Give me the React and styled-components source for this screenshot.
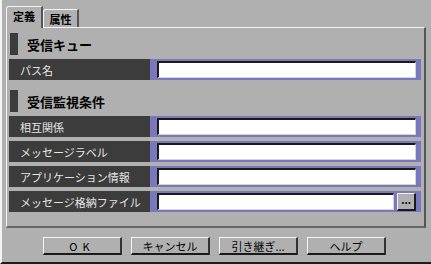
import React from 'react'
import styled, { createGlobalStyle } from 'styled-components'

const GlobalStyle = createGlobalStyle`
    html, body {
        margin: 0;
        padding: 0;
        background: #b0b0b0;
    }
    body {
        font-family: "Noto Sans CJK JP", "DejaVu Sans", sans-serif;
        color: #000;
    }
`;

const Window = styled.div`
    box-sizing: border-box;
    width: 431px;
    height: 264px;
    background: #b0b0b0;
    border-left: 2px solid #f4f4f4;
    border-bottom: 2px solid #1c1c1c;
    padding: 6px 4px 0 4px;
    display: flex;
    flex-direction: column;
`;

const TabBar = styled.div`
    display: flex;
    align-items: flex-end;
    height: 21px;
    position: relative;
    z-index: 1;
`;

const Tab = styled.div`
    box-sizing: border-box;
    width: ${p => p.$width}px;
    height: ${p => (p.$active ? 22 : 18)}px;
    margin-bottom: ${p => (p.$active ? -1 : 0)}px;
    background: #b0b0b0;
    border-top: 1px solid #f4f4f4;
    border-left: 1px solid #f4f4f4;
    border-right: 2px solid #555;
    border-top-left-radius: 3px;
    font-size: 11px;
    font-weight: 700;
    display: flex;
    align-items: center;
    justify-content: center;
    padding-bottom: ${p => (p.$active ? 3 : 0)}px;
`;

const Panel = styled.div`
    box-sizing: border-box;
    width: 420px;
    height: 201px;
    border-top: 1px solid #f4f4f4;
    border-left: 1px solid #f4f4f4;
    border-right: 2px solid #555;
    border-bottom: 2px solid #666;
    padding: 5px 3px 0 2px;
    display: flex;
    flex-direction: column;
`;

const SectionHead = styled.div`
    display: flex;
    align-items: center;
    height: 22px;
    margin-top: ${p => p.$top}px;
    padding-left: 1px;
    font-size: 13px;
    font-weight: 700;
    &:before {
        content: '';
        width: 8px;
        height: 22px;
        background: #3c3c3c;
        margin-right: 9px;
    }
`;

const Rows = styled.div`
    display: flex;
    flex-direction: column;
    gap: 4px;
    margin-top: 4px;
`;

const Row = styled.div`
    display: grid;
    grid-template-columns: 141px 1fr;
    height: 21px;
`;

const Label = styled.div`
    background: #3c3c3c;
    color: #e6e6e6;
    font-size: 11px;
    display: flex;
    align-items: center;
    padding-left: 11px;
    white-space: nowrap;
`;

const Field = styled.div`
    background: #7a78bc;
    display: flex;
    align-items: center;
    gap: 3px;
    padding: 0 5px 0 7px;
`;

const Input = styled.div`
    box-sizing: border-box;
    flex: 1;
    height: 17px;
    background: #fff;
    border-top: 2px solid #1a1a1a;
    border-left: 2px solid #1a1a1a;
    border-bottom: 1px solid #d4d4d4;
    border-right: 1px solid #d4d4d4;
`;

const DotsButton = styled.div`
    box-sizing: border-box;
    width: 19px;
    height: 18px;
    background: #b0b0b0;
    border-top: 1px solid #f4f4f4;
    border-left: 1px solid #f4f4f4;
    border-bottom: 2px solid #1a1a1a;
    border-right: 2px solid #1a1a1a;
    font-size: 10px;
    font-weight: 700;
    line-height: 12px;
    text-align: center;
    letter-spacing: 0px;
`;

const ButtonBar = styled.div`
    display: flex;
    justify-content: center;
    gap: 9px;
    margin-top: 9px;
    padding-right: 4px;
`;

const Button = styled.div`
    box-sizing: border-box;
    width: 79px;
    height: 18px;
    background: #b0b0b0;
    border-top: 1px solid #f4f4f4;
    border-left: 1px solid #f4f4f4;
    border-bottom: 2px solid #1a1a1a;
    border-right: 2px solid #333;
    font-size: 11px;
    display: flex;
    align-items: center;
    justify-content: center;
    letter-spacing: ${p => p.$spacing || 0}px;
`;

const queueRows = ['パス名']
const condRows = ['相互関係', 'メッセージラベル', 'アプリケーション情報', 'メッセージ格納ファイル']

function App() {
    return (
        <Window>
            <GlobalStyle />
            <TabBar>
                <Tab $active $width={37}>定義</Tab>
                <Tab $width={36}>属性</Tab>
            </TabBar>
            <Panel>
                <SectionHead $top={0}>受信キュー</SectionHead>
                <Rows>
                    {queueRows.map(name => (
                        <Row key={name}>
                            <Label>{name}</Label>
                            <Field><Input /></Field>
                        </Row>
                    ))}
                </Rows>
                <SectionHead $top={10}>受信監視条件</SectionHead>
                <Rows>
                    {condRows.map((name, i) => (
                        <Row key={name}>
                            <Label>{name}</Label>
                            <Field>
                                <Input />
                                {i === condRows.length - 1 && <DotsButton>...</DotsButton>}
                            </Field>
                        </Row>
                    ))}
                </Rows>
            </Panel>
            <ButtonBar>
                <Button $spacing={5}>OK</Button>
                <Button>キャンセル</Button>
                <Button>引き継ぎ...</Button>
                <Button>ヘルプ</Button>
            </ButtonBar>
        </Window>
    )
}

export default App
